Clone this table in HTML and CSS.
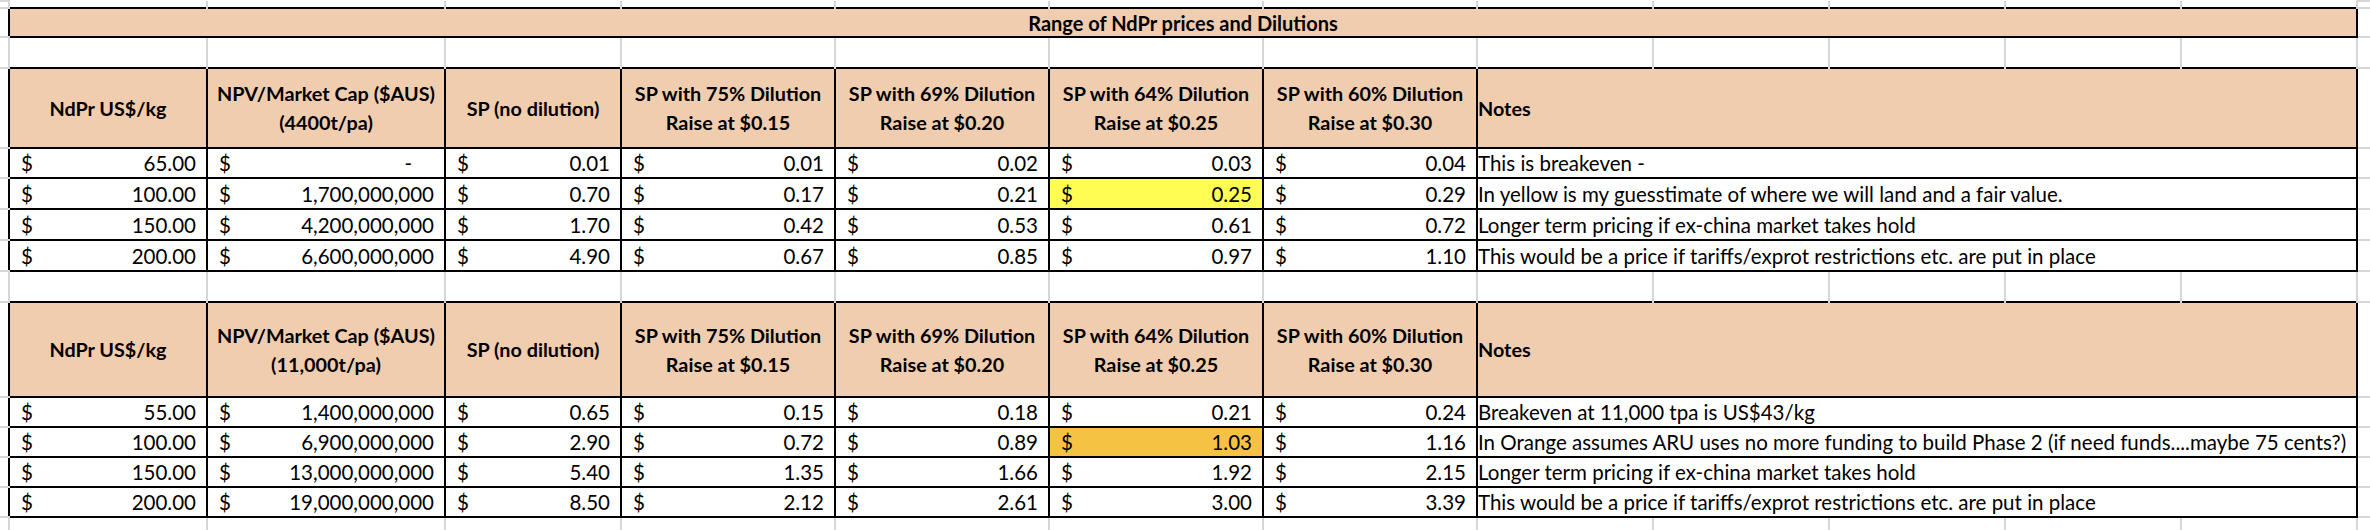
FILE: index.html
```html
<!DOCTYPE html>
<html lang="en">
<head>
<meta charset="utf-8">
<title>Range of NdPr prices and Dilutions</title>
<link rel="stylesheet" href="styles.css">
</head>
<body>
<table class="sheet">
  <colgroup>
    <col class="c-edge-l">
    <col class="c-a">
    <col class="c-b">
    <col class="c-c">
    <col class="c-d"><col class="c-d"><col class="c-d"><col class="c-d">
    <col class="c-h"><col class="c-h"><col class="c-h"><col class="c-h"><col class="c-h">
    <col class="c-edge-r">
  </colgroup>
  <tbody>
    <tr class="r-top">
      <td class="edge"></td>
      <td class="gap"></td><td class="gap"></td><td class="gap"></td><td class="gap"></td><td class="gap"></td><td class="gap"></td>
      <td class="gap"></td><td class="gap"></td><td class="gap"></td><td class="gap"></td><td class="gap"></td><td class="gap"></td>
      <td class="edge"></td>
    </tr>
    <tr class="r-title">
      <td class="edge"></td>
      <td class="cell title" colspan="12">Range of NdPr prices and Dilutions</td>
      <td class="edge"></td>
    </tr>
    <tr class="r-blank">
      <td class="edge"></td>
      <td class="gap"></td><td class="gap"></td><td class="gap"></td><td class="gap"></td><td class="gap"></td><td class="gap"></td>
      <td class="gap"></td><td class="gap"></td><td class="gap"></td><td class="gap"></td><td class="gap"></td><td class="gap"></td>
      <td class="edge"></td>
    </tr>
    <tr class="r-head1">
      <td class="edge"></td>
      <th class="cell head">NdPr US$/kg</th>
      <th class="cell head">NPV/Market Cap ($AUS)<br>(4400t/pa)</th>
      <th class="cell head">SP (no dilution)</th>
      <th class="cell head">SP with 75% Dilution<br>Raise at $0.15</th>
      <th class="cell head">SP with 69% Dilution<br>Raise at $0.20</th>
      <th class="cell head">SP with 64% Dilution<br>Raise at $0.25</th>
      <th class="cell head">SP with 60% Dilution<br>Raise at $0.30</th>
      <th class="cell head notes-head" colspan="5">Notes</th>
      <td class="edge"></td>
    </tr>
    <tr class="r-data1">
      <td class="edge"></td>
      <td class="cell num"><div class="acc"><span>$</span><span>65.00</span></div></td>
      <td class="cell num"><div class="acc"><span>$</span><span class="dash">-</span></div></td>
      <td class="cell num"><div class="acc"><span>$</span><span>0.01</span></div></td>
      <td class="cell num"><div class="acc"><span>$</span><span>0.01</span></div></td>
      <td class="cell num"><div class="acc"><span>$</span><span>0.02</span></div></td>
      <td class="cell num"><div class="acc"><span>$</span><span>0.03</span></div></td>
      <td class="cell num"><div class="acc"><span>$</span><span>0.04</span></div></td>
      <td class="cell note" colspan="5">This is breakeven -</td>
      <td class="edge"></td>
    </tr>
    <tr class="r-data1b">
      <td class="edge"></td>
      <td class="cell num"><div class="acc"><span>$</span><span>100.00</span></div></td>
      <td class="cell num"><div class="acc"><span>$</span><span>1,700,000,000</span></div></td>
      <td class="cell num"><div class="acc"><span>$</span><span>0.70</span></div></td>
      <td class="cell num"><div class="acc"><span>$</span><span>0.17</span></div></td>
      <td class="cell num"><div class="acc"><span>$</span><span>0.21</span></div></td>
      <td class="cell num hl-yellow"><div class="acc"><span>$</span><span>0.25</span></div></td>
      <td class="cell num"><div class="acc"><span>$</span><span>0.29</span></div></td>
      <td class="cell note" colspan="5">In yellow is my guesstimate of where we will land and a fair value.</td>
      <td class="edge"></td>
    </tr>
    <tr class="r-data1b">
      <td class="edge"></td>
      <td class="cell num"><div class="acc"><span>$</span><span>150.00</span></div></td>
      <td class="cell num"><div class="acc"><span>$</span><span>4,200,000,000</span></div></td>
      <td class="cell num"><div class="acc"><span>$</span><span>1.70</span></div></td>
      <td class="cell num"><div class="acc"><span>$</span><span>0.42</span></div></td>
      <td class="cell num"><div class="acc"><span>$</span><span>0.53</span></div></td>
      <td class="cell num"><div class="acc"><span>$</span><span>0.61</span></div></td>
      <td class="cell num"><div class="acc"><span>$</span><span>0.72</span></div></td>
      <td class="cell note" colspan="5">Longer term pricing if ex-china market takes hold</td>
      <td class="edge"></td>
    </tr>
    <tr class="r-data1b">
      <td class="edge"></td>
      <td class="cell num"><div class="acc"><span>$</span><span>200.00</span></div></td>
      <td class="cell num"><div class="acc"><span>$</span><span>6,600,000,000</span></div></td>
      <td class="cell num"><div class="acc"><span>$</span><span>4.90</span></div></td>
      <td class="cell num"><div class="acc"><span>$</span><span>0.67</span></div></td>
      <td class="cell num"><div class="acc"><span>$</span><span>0.85</span></div></td>
      <td class="cell num"><div class="acc"><span>$</span><span>0.97</span></div></td>
      <td class="cell num"><div class="acc"><span>$</span><span>1.10</span></div></td>
      <td class="cell note" colspan="5">This would be a price if tariffs/exprot restrictions etc. are put in place</td>
      <td class="edge"></td>
    </tr>
    <tr class="r-blank">
      <td class="edge"></td>
      <td class="gap"></td><td class="gap"></td><td class="gap"></td><td class="gap"></td><td class="gap"></td><td class="gap"></td>
      <td class="gap"></td><td class="gap"></td><td class="gap"></td><td class="gap"></td><td class="gap"></td><td class="gap"></td>
      <td class="edge"></td>
    </tr>
    <tr class="r-head2">
      <td class="edge"></td>
      <th class="cell head">NdPr US$/kg</th>
      <th class="cell head">NPV/Market Cap ($AUS)<br>(11,000t/pa)</th>
      <th class="cell head">SP (no dilution)</th>
      <th class="cell head">SP with 75% Dilution<br>Raise at $0.15</th>
      <th class="cell head">SP with 69% Dilution<br>Raise at $0.20</th>
      <th class="cell head">SP with 64% Dilution<br>Raise at $0.25</th>
      <th class="cell head">SP with 60% Dilution<br>Raise at $0.30</th>
      <th class="cell head notes-head" colspan="5">Notes</th>
      <td class="edge"></td>
    </tr>
    <tr class="r-data2">
      <td class="edge"></td>
      <td class="cell num"><div class="acc"><span>$</span><span>55.00</span></div></td>
      <td class="cell num"><div class="acc"><span>$</span><span>1,400,000,000</span></div></td>
      <td class="cell num"><div class="acc"><span>$</span><span>0.65</span></div></td>
      <td class="cell num"><div class="acc"><span>$</span><span>0.15</span></div></td>
      <td class="cell num"><div class="acc"><span>$</span><span>0.18</span></div></td>
      <td class="cell num"><div class="acc"><span>$</span><span>0.21</span></div></td>
      <td class="cell num"><div class="acc"><span>$</span><span>0.24</span></div></td>
      <td class="cell note" colspan="5">Breakeven at 11,000 tpa is US$43/kg</td>
      <td class="edge"></td>
    </tr>
    <tr class="r-data2">
      <td class="edge"></td>
      <td class="cell num"><div class="acc"><span>$</span><span>100.00</span></div></td>
      <td class="cell num"><div class="acc"><span>$</span><span>6,900,000,000</span></div></td>
      <td class="cell num"><div class="acc"><span>$</span><span>2.90</span></div></td>
      <td class="cell num"><div class="acc"><span>$</span><span>0.72</span></div></td>
      <td class="cell num"><div class="acc"><span>$</span><span>0.89</span></div></td>
      <td class="cell num hl-orange"><div class="acc"><span>$</span><span>1.03</span></div></td>
      <td class="cell num"><div class="acc"><span>$</span><span>1.16</span></div></td>
      <td class="cell note" colspan="5">In Orange assumes ARU uses no more funding to build Phase 2 (if need funds....maybe 75 cents?)</td>
      <td class="edge"></td>
    </tr>
    <tr class="r-data2">
      <td class="edge"></td>
      <td class="cell num"><div class="acc"><span>$</span><span>150.00</span></div></td>
      <td class="cell num"><div class="acc"><span>$</span><span>13,000,000,000</span></div></td>
      <td class="cell num"><div class="acc"><span>$</span><span>5.40</span></div></td>
      <td class="cell num"><div class="acc"><span>$</span><span>1.35</span></div></td>
      <td class="cell num"><div class="acc"><span>$</span><span>1.66</span></div></td>
      <td class="cell num"><div class="acc"><span>$</span><span>1.92</span></div></td>
      <td class="cell num"><div class="acc"><span>$</span><span>2.15</span></div></td>
      <td class="cell note" colspan="5">Longer term pricing if ex-china market takes hold</td>
      <td class="edge"></td>
    </tr>
    <tr class="r-data2">
      <td class="edge"></td>
      <td class="cell num"><div class="acc"><span>$</span><span>200.00</span></div></td>
      <td class="cell num"><div class="acc"><span>$</span><span>19,000,000,000</span></div></td>
      <td class="cell num"><div class="acc"><span>$</span><span>8.50</span></div></td>
      <td class="cell num"><div class="acc"><span>$</span><span>2.12</span></div></td>
      <td class="cell num"><div class="acc"><span>$</span><span>2.61</span></div></td>
      <td class="cell num"><div class="acc"><span>$</span><span>3.00</span></div></td>
      <td class="cell num"><div class="acc"><span>$</span><span>3.39</span></div></td>
      <td class="cell note" colspan="5">This would be a price if tariffs/exprot restrictions etc. are put in place</td>
      <td class="edge"></td>
    </tr>
    <tr class="r-bottom">
      <td class="edge"></td>
      <td class="gap"></td><td class="gap"></td><td class="gap"></td><td class="gap"></td><td class="gap"></td><td class="gap"></td>
      <td class="gap"></td><td class="gap"></td><td class="gap"></td><td class="gap"></td><td class="gap"></td><td class="gap"></td>
      <td class="edge"></td>
    </tr>
  </tbody>
</table>
</body>
</html>
```
FILE: styles.css
```css
html, body {
  margin: 0;
  padding: 0;
  background: #ffffff;
}

body {
  font-family: Lato, "Liberation Sans", sans-serif;
  color: #000000;
  overflow: hidden;
}

.sheet {
  border-collapse: collapse;
  table-layout: fixed;
  width: 2370px;
  font-size: 20.5px;
}

.sheet td,
.sheet th {
  padding: 0;
  white-space: nowrap;
  overflow: hidden;
}

.c-edge-l { width: 9px; }
.c-a { width: 198px; }
.c-b { width: 238px; }
.c-c { width: 176px; }
.c-d { width: 214px; }
.c-h { width: 176px; }
.c-edge-r { width: 13px; }

.r-top { height: 7px; }
.r-title { height: 29px; }
.r-blank { height: 31px; }
.r-head1 { height: 80px; }
.r-data1 { height: 30px; }
.r-data1b { height: 31px; }
.r-head2 { height: 95px; }
.r-data2 { height: 30px; }
.r-bottom { height: 14px; }

.edge {
  border-top: 2px solid #d6d6d6;
  border-bottom: 2px solid #d6d6d6;
}

.gap {
  border-left: 2px solid #d6d6d6;
  border-right: 2px solid #d6d6d6;
}

.cell {
  border: 2px solid #000000;
  vertical-align: middle;
}

.title {
  background: #f1cdb0;
  font-weight: 700;
  font-size: 20px;
  text-align: center;
}

.head {
  background: #f1cdb0;
  font-weight: 700;
  font-size: 19.8px;
  text-align: center;
  line-height: 29px;
}

.notes-head {
  text-align: left;
  padding-left: 4px;
}

.acc {
  display: flex;
  justify-content: space-between;
  align-items: center;
  padding: 0 10px 0 11px;
}

.dash {
  padding-right: 22px;
}

.note {
  padding-left: 5px;
}

.hl-yellow { background: #fffc54; }
.hl-orange { background: #f6c243; }
```
